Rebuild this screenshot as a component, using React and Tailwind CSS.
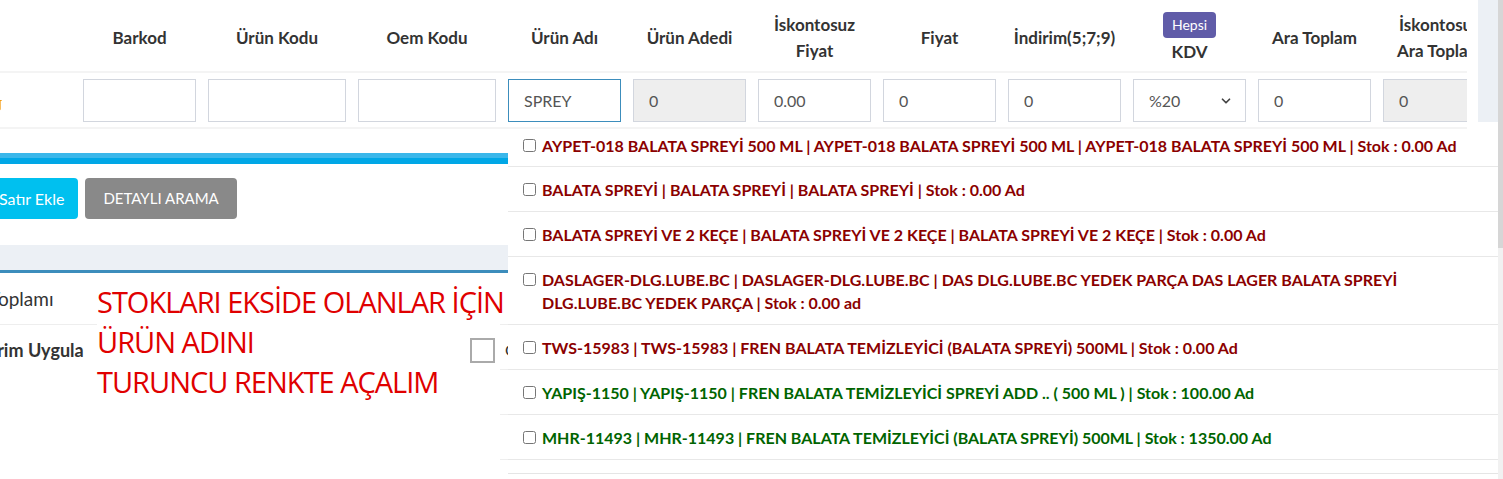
import { Trash2, ChevronDown } from "lucide-react";

const COLUMNS = [
  { label: "Barkod", w: "w-[125px]", value: "" },
  { label: "Ürün Kodu", w: "w-[150px]", value: "" },
  { label: "Oem Kodu", w: "w-[150px]", value: "" },
  { label: "Ürün Adı", w: "w-[125px]", value: "SPREY", focus: true },
  { label: "Ürün Adedi", w: "w-[125px]", value: "0", disabled: true },
  { label: ["İskontosuz", "Fiyat"], w: "w-[125px]", value: "0.00" },
  { label: "Fiyat", w: "w-[125px]", value: "0" },
  { label: "İndirim(5;7;9)", w: "w-[125px]", value: "0" },
  { label: "KDV", w: "w-[125px]", value: "%20", select: true, badge: "Hepsi" },
  { label: "Ara Toplam", w: "w-[125px]", value: "0" },
  { label: ["İskontosuz", "Ara Toplam"], w: "w-[125px]", value: "0", disabled: true },
];

const RESULTS = [
  {
    text: "AYPET-018 BALATA SPREYİ 500 ML | AYPET-018 BALATA SPREYİ 500 ML | AYPET-018 BALATA SPREYİ 500 ML | Stok : 0.00 Ad",
    inStock: false,
  },
  { text: "BALATA SPREYİ | BALATA SPREYİ | BALATA SPREYİ | Stok : 0.00 Ad", inStock: false },
  {
    text: "BALATA SPREYİ VE 2 KEÇE | BALATA SPREYİ VE 2 KEÇE | BALATA SPREYİ VE 2 KEÇE | Stok : 0.00 Ad",
    inStock: false,
  },
  {
    text: "DASLAGER-DLG.LUBE.BC | DASLAGER-DLG.LUBE.BC | DAS DLG.LUBE.BC YEDEK PARÇA DAS LAGER BALATA SPREYİ DLG.LUBE.BC YEDEK PARÇA | Stok : 0.00 ad",
    inStock: false,
  },
  {
    text: "TWS-15983 | TWS-15983 | FREN BALATA TEMİZLEYİCİ (BALATA SPREYİ) 500ML | Stok : 0.00 Ad",
    inStock: false,
  },
  {
    text: "YAPIŞ-1150 | YAPIŞ-1150 | FREN BALATA TEMİZLEYİCİ SPREYİ ADD .. ( 500 ML ) | Stok : 100.00 Ad",
    inStock: true,
  },
  {
    text: "MHR-11493 | MHR-11493 | FREN BALATA TEMİZLEYİCİ (BALATA SPREYİ) 500ML | Stok : 1350.00 Ad",
    inStock: true,
  },
];

function HeaderCell({ col }) {
  const lines = Array.isArray(col.label) ? col.label : [col.label];
  return (
    <div className={`${col.w} flex shrink-0 flex-col items-center justify-center pt-[5px] text-center text-[17px] leading-[26px] font-bold whitespace-nowrap`}>
      {col.badge && (
        <span className="mb-[1px] rounded-[4px] bg-[#605ca8] px-[9px] text-[14px] leading-[26px] font-normal text-white">
          {col.badge}
        </span>
      )}
      {lines.map((l) => (
        <span key={l}>{l}</span>
      ))}
    </div>
  );
}

function InputCell({ col }) {
  const border = col.focus ? "border-[#3c8dbc]" : "border-[#d2d6de]";
  const bg = col.disabled ? "bg-[#eeeeee]" : "bg-white";
  return (
    <div className={`${col.w} shrink-0 px-[6px]`}>
      <div
        className={`flex h-[43px] items-center justify-between border ${border} ${bg} pl-[15px] pr-[12px] text-[16px] text-[#555]`}
      >
        <span>{col.value}</span>
        {col.select && <ChevronDown size={14} strokeWidth={3} className="text-[#444]" />}
      </div>
    </div>
  );
}

export default function App() {
  return (
    <div className="relative h-[479px] w-[1503px] overflow-hidden bg-white font-['Lato',sans-serif] text-[#333]">
      <div className="flex">
        <div className="w-[1478px] shrink-0">
          {/* product line table, scrolled sideways */}
          <div className="w-[1467px] overflow-hidden">
            <div className="flex h-[73px] border-b-2 border-[#f4f4f4]">
              <div className="w-[77px] shrink-0" />
              {COLUMNS.map((c, i) => (
                <HeaderCell key={i} col={c} />
              ))}
            </div>
            <div className="flex h-[56px] items-start border-b-2 border-[#f4f4f4] pt-[6px]">
              <div className="flex w-[77px] shrink-0 pt-[18px]">
                <Trash2 size={14} className="-ml-[11px] text-[#f39c12]" />
              </div>
              {COLUMNS.map((c, i) => (
                <InputCell key={i} col={c} />
              ))}
            </div>
          </div>

          {/* lower panels */}
          <div className="pt-[24px]">
            <div className="h-[11px] border-t-[5px] border-[#3bb7ea] bg-[#00a7e6]" />
            <div className="flex gap-[7px] pt-[14px] pb-[26px]">
              <button className="-ml-[15px] h-[41px] rounded-[4px] bg-[#00c0ef] px-[14px] text-[16px] text-white">
                Satır Ekle
              </button>
              <button className="h-[41px] rounded-[4px] bg-[#898989] px-[18px] text-[15px] text-white">
                DETAYLI ARAMA
              </button>
            </div>
            <div className="h-[28px] border-b-[3px] border-[#3c8dbc] bg-[#ecf0f5]" />
            <div className="mt-[8px] flex h-[43px] items-center pb-[6px]">
              <span className="-ml-[11px] text-[19px]">Toplamı</span>
            </div>
            <div className="flex">
              <div className="w-[97px] border-t border-[#eeeeee]" />
              <div className="ml-[403px] flex-1 border-t border-[#eeeeee]" />
            </div>
            <div className="flex h-[44px] items-center pt-[6px]">
              <div className="w-[470px] shrink-0">
                <span className="-ml-[33px] text-[18px] font-bold">İndirim Uygula</span>
              </div>
              <div className="flex items-center gap-[10px]">
                <div className="h-[25px] w-[25px] border-2 border-[#aaaaaa]" />
                <span className="text-[16px]">Ö</span>
              </div>
            </div>
            <div className="ml-[500px] border-t border-[#eeeeee]">
              <div className="h-[45px] border-b border-[#eeeeee]" />
              <div className="h-[45px] border-b border-[#eeeeee]" />
            </div>
          </div>
        </div>
        <div className="h-[122px] w-[20px] shrink-0 bg-[#ecf0f5]" />
        <div className="h-[479px] w-[5px] shrink-0 bg-[#f1f1f1]">
          <div className="h-[248px] bg-[#d6d6d6]" />
        </div>
      </div>

      {/* autocomplete dropdown */}
      <div className="absolute top-[129px] left-[508px] w-[990px] border-b border-[#e5e5e5] bg-white pb-[13px]">
        {RESULTS.map((r, i) => (
          <label
            key={i}
            className={`flex items-start gap-[6px] border-b border-[#e8e8e8] pl-[15px] pr-[30px] text-[16px] leading-[23px] font-bold ${
              i === 0 ? "pt-[5px] pb-[9px]" : "pt-[11px] pb-[10px]"
            } ${r.inStock ? "text-[#006400]" : "text-[#8b0000]"}`}
          >
            <input type="checkbox" className="mt-[5px] h-[13px] w-[13px] shrink-0" />
            <span>{r.text}</span>
          </label>
        ))}
      </div>

      {/* annotation drawn over the page */}
      <div className="absolute top-[282px] left-[97px] z-10 font-['Open_Sans',sans-serif] text-[29px] leading-[40px] tracking-[-1px] whitespace-nowrap text-[#e00000]">
        <div>STOKLARI EKSİDE OLANLAR İÇİN</div>
        <div>ÜRÜN ADINI</div>
        <div>TURUNCU RENKTE AÇALIM</div>
      </div>
    </div>
  );
}
